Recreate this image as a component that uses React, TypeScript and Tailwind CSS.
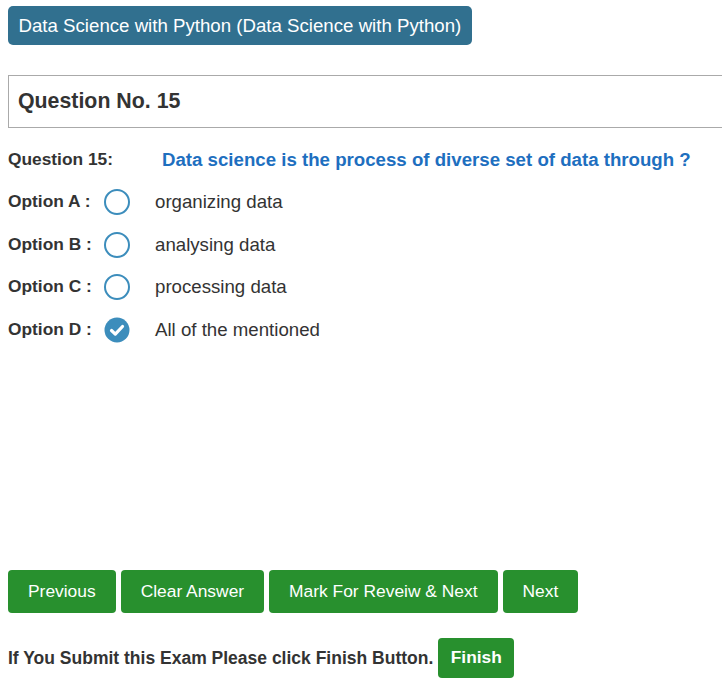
import { useState } from "react";

const options = [
  { key: "A", text: "organizing data" },
  { key: "B", text: "analysing data" },
  { key: "C", text: "processing data" },
  { key: "D", text: "All of the mentioned" },
];

function Radio({ checked }: { checked: boolean }) {
  if (checked) {
    return (
      <svg width="26" height="26" viewBox="0 0 26 26" className="shrink-0">
        <circle cx="13" cy="13" r="12.5" fill="#3c8dbc" />
        <path d="M7.5 13.5l3.8 3.6 7.2-7.6" fill="none" stroke="#fff" strokeWidth="3.2" strokeLinecap="round" strokeLinejoin="round" />
      </svg>
    );
  }
  return <span className="shrink-0 w-[26px] h-[26px] rounded-full border-2 border-[#3c8dbc] bg-white" />;
}

export default function App() {
  const [answer, setAnswer] = useState("D");

  return (
    <div className="min-h-[696px] bg-white overflow-hidden pl-2 text-[#333] font-['Liberation_Sans',Arial,sans-serif]">
      <div className="pt-[6px]">
        <span className="inline-flex items-center h-[39px] px-[10.5px] rounded-[5px] bg-[#31708f] text-white text-[18.67px]">
          Data Science with Python (Data Science with Python)
        </span>
      </div>

      <div className="mt-[30px] -mr-4 h-[53px] border border-[#aaa] flex items-center pl-[9px]">
        <h4 className="text-[21.33px] font-bold text-[#333]">Question No. 15</h4>
      </div>

      <div className="mt-[18px] h-[28px] flex items-center">
        <span className="w-[154px] text-[17.33px] font-bold">Question 15:</span>
        <span className="text-[18.67px] font-bold text-[#1e6fbf]">
          Data science is the process of diverse set of data through ?
        </span>
      </div>

      <div className="mt-[7px]">
        {options.map((o) => (
          <div key={o.key} className="h-[42.5px] flex items-center cursor-pointer" onClick={() => setAnswer(o.key)}>
            <span className="w-[96px] text-[17.33px] font-bold">Option {o.key} :</span>
            <Radio checked={answer === o.key} />
            <span className="ml-[25px] text-[18.67px]">{o.text}</span>
          </div>
        ))}
      </div>

      <div className="mt-[219px] flex gap-[5px]">
        {["Previous", "Clear Answer", "Mark For Reveiw & Next", "Next"].map((b) => (
          <button key={b} className="h-[43px] px-[20px] rounded-[4px] bg-[#28902e] text-white text-[17.4px]">
            {b}
          </button>
        ))}
      </div>

      <div className="mt-[25px] flex items-center gap-[5px]">
        <span className="text-[17.5px] font-bold">If You Submit this Exam Please click Finish Button.</span>
        <button className="h-[40px] px-[12.5px] rounded-[4px] bg-[#28902e] text-white text-[17.33px] font-bold">
          Finish
        </button>
      </div>
    </div>
  );
}
